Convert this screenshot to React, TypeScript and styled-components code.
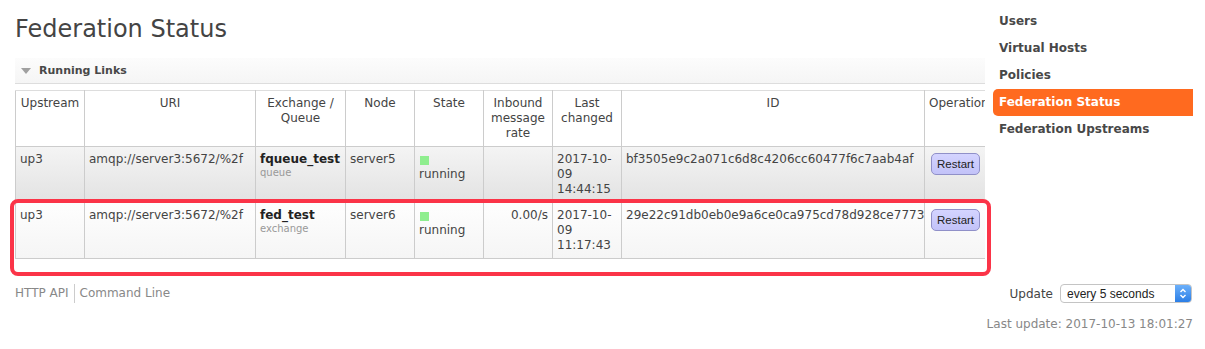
import React from "react"
import styled, { createGlobalStyle } from "styled-components"

const GlobalStyle = createGlobalStyle`
  html, body {
    margin: 0;
    padding: 0;
    background: #fff;
  }
  body {
    font-family: "DejaVu Sans", Verdana, sans-serif;
    font-size: 12px;
    color: #444;
  }
`

const Page = styled.div`
  position: relative;
  width: 1205px;
  height: 349px;
  overflow: hidden;
`

const TopRow = styled.div`
  display: flex;
  align-items: flex-start;
`

const Main = styled.div`
  width: 970px;
  margin-left: 15px;
  overflow: hidden;
`

const Title = styled.h1`
  margin: 0;
  padding-top: 14px;
  font-size: 24px;
  line-height: 30px;
  font-weight: normal;
  color: #444;
`

const SectionHeader = styled.div`
  display: flex;
  align-items: center;
  gap: 8px;
  height: 25px;
  margin-top: 14px;
  padding-left: 6px;
  background: linear-gradient(#fcfcfc, #f5f5f5);
  border-bottom: 1px solid #ddd;
`

const Toggle = styled.span`
  width: 0;
  height: 0;
  border-left: 5.5px solid transparent;
  border-right: 5.5px solid transparent;
  border-top: 6px solid #a0a0a0;
`

const SectionTitle = styled.span`
  font-size: 11px;
  font-weight: bold;
  color: #484848;
`

const Table = styled.table`
  margin-top: 6px;
  width: 979px;
  table-layout: fixed;
  border-collapse: collapse;
`

const Th = styled.th`
  padding: 5px 4px;
  border: 1px solid #ccc;
  border-top-color: #ddd;
  font-weight: normal;
  text-align: center;
  vertical-align: top;
  line-height: 15px;
  color: #444;
  white-space: normal;
  &:last-child {
    text-align: left;
    white-space: nowrap;
    overflow: hidden;
  }
`

const Tr = styled.tr<{ $alt?: boolean }>`
  background: ${(p) =>
    p.$alt ? "linear-gradient(#f4f4f4, #e2e2e2)" : "linear-gradient(#fefefe, #f5f5f5)"};
`

const Td = styled.td<{ $right?: boolean }>`
  padding: 5px 4px;
  border: 1px solid #ccc;
  border-top: 0;
  border-bottom: 1px solid #ccc;
  vertical-align: top;
  line-height: 15px;
  text-align: ${(p) => (p.$right ? "right" : "left")};
  white-space: nowrap;
  overflow: hidden;
`

const Wrap = styled.div`
  white-space: normal;
  word-break: break-all;
`

const Strong = styled.div`
  font-weight: bold;
  color: #222;
`

const Sub = styled.div`
  font-size: 10px;
  line-height: 12px;
  color: #999;
`

const StateBox = styled.div`
  width: 9px;
  height: 9px;
  margin: 4px 0 2px 1px;
  background: #8fee8f;
`

const RestartButton = styled.button`
  margin-top: 1px;
  margin-left: 2px;
  height: 22px;
  padding: 0 5px;
  font-family: "Liberation Sans", Arial, sans-serif;
  font-size: 11.5px;
  color: #222;
  background: linear-gradient(#d4d4ff, #c2c2f8);
  border: 1px solid #9090c8;
  border-radius: 5px;
  cursor: pointer;
`

const Sidebar = styled.ul`
  list-style: none;
  margin: 0 0 0 8px;
  padding: 8px 0 0 0;
  width: 200px;
`

const NavItem = styled.li<{ $active?: boolean }>`
  height: 27px;
  line-height: 27px;
  padding-left: 6px;
  font-weight: bold;
  font-size: 12px;
  color: ${(p) => (p.$active ? "#fff" : "#484848")};
  background: ${(p) => (p.$active ? "#ff6a1f" : "transparent")};
  border-radius: 5px 0 0 5px;
`

const Footer = styled.div`
  display: flex;
  justify-content: space-between;
  align-items: center;
  margin-top: 25px;
  padding: 0 13px 0 15px;
  height: 19px;
`

const Links = styled.div`
  display: flex;
  align-items: center;
  color: #888;
`

const LinkItem = styled.span<{ $sep?: boolean }>`
  padding: ${(p) => (p.$sep ? "0 0 0 5px" : "0 5px 0 0")};
  border-left: ${(p) => (p.$sep ? "1px solid #ccc" : "none")};
  line-height: 19px;
`

const UpdateBox = styled.div`
  display: flex;
  align-items: center;
  gap: 7px;
`

const FakeSelect = styled.div`
  display: flex;
  align-items: center;
  justify-content: space-between;
  width: 124px;
  height: 17px;
  padding-left: 6px;
  border: 1px solid #c4c4c4;
  border-radius: 4px;
  background: #fff;
  font-family: "Liberation Sans", Arial, sans-serif;
  font-size: 12px;
  color: #222;
  overflow: hidden;
`

const Stepper = styled.span`
  display: flex;
  align-items: center;
  justify-content: center;
  width: 16px;
  height: 17px;
  background: linear-gradient(#6cb0fa, #2b7ee6);
`

const LastUpdate = styled.div`
  margin-top: 14px;
  padding-right: 12px;
  text-align: right;
  color: #888;
  line-height: 15px;
`

const Highlight = styled.div`
  position: absolute;
  left: 10px;
  top: 199px;
  width: 973px;
  height: 69px;
  border: 4px solid #fb3448;
  border-radius: 8px;
  pointer-events: none;
`

const columns = [69, 171, 90, 69, 69, 69, 69, 303, 70]

const links = [
  {
    upstream: "up3",
    uri: "amqp://server3:5672/%2f",
    name: "fqueue_test",
    kind: "queue",
    node: "server5",
    rate: "",
    changed: ["2017-10-", "09", "14:44:15"],
    id: "bf3505e9c2a071c6d8c4206cc60477f6c7aab4af",
  },
  {
    upstream: "up3",
    uri: "amqp://server3:5672/%2f",
    name: "fed_test",
    kind: "exchange",
    node: "server6",
    rate: "0.00/s",
    changed: ["2017-10-", "09", "11:17:43"],
    id: "29e22c91db0eb0e9a6ce0ca975cd78d928ce7773",
  },
]

const navItems = ["Users", "Virtual Hosts", "Policies", "Federation Status", "Federation Upstreams"]

export default function App() {
  return (
    <Page>
      <GlobalStyle />
      <TopRow>
        <Main>
          <Title>Federation Status</Title>
          <SectionHeader>
            <Toggle />
            <SectionTitle>Running Links</SectionTitle>
          </SectionHeader>
          <Table>
            <colgroup>
              {columns.map((w, i) => (
                <col key={i} style={{ width: w }} />
              ))}
            </colgroup>
            <thead>
              <tr>
                <Th>Upstream</Th>
                <Th>URI</Th>
                <Th>Exchange / Queue</Th>
                <Th>Node</Th>
                <Th>State</Th>
                <Th>Inbound message rate</Th>
                <Th>Last changed</Th>
                <Th>ID</Th>
                <Th>Operations</Th>
              </tr>
            </thead>
            <tbody>
              {links.map((link, i) => (
                <Tr key={link.id} $alt={i === 0}>
                  <Td>{link.upstream}</Td>
                  <Td>{link.uri}</Td>
                  <Td>
                    <Strong>{link.name}</Strong>
                    <Sub>{link.kind}</Sub>
                  </Td>
                  <Td>{link.node}</Td>
                  <Td>
                    <StateBox />
                    running
                  </Td>
                  <Td $right>{link.rate}</Td>
                  <Td>
                    <Wrap>
                      {link.changed.map((line) => (
                        <div key={line}>{line}</div>
                      ))}
                    </Wrap>
                  </Td>
                  <Td>{link.id}</Td>
                  <Td>
                    <RestartButton>Restart</RestartButton>
                  </Td>
                </Tr>
              ))}
            </tbody>
          </Table>
        </Main>
        <Sidebar>
          {navItems.map((item) => (
            <NavItem key={item} $active={item === "Federation Status"}>
              {item}
            </NavItem>
          ))}
        </Sidebar>
      </TopRow>
      <Footer>
        <Links>
          <LinkItem>HTTP API</LinkItem>
          <LinkItem $sep>Command Line</LinkItem>
        </Links>
        <UpdateBox>
          <span>Update</span>
          <FakeSelect>
            every 5 seconds
            <Stepper>
              <svg width="8" height="11" viewBox="0 0 8 11" fill="none" stroke="#fff" strokeWidth="1.4">
                <path d="M1.5 4 L4 1.5 L6.5 4" />
                <path d="M1.5 7 L4 9.5 L6.5 7" />
              </svg>
            </Stepper>
          </FakeSelect>
        </UpdateBox>
      </Footer>
      <LastUpdate>Last update: 2017-10-13 18:01:27</LastUpdate>
      <Highlight />
    </Page>
  )
}
